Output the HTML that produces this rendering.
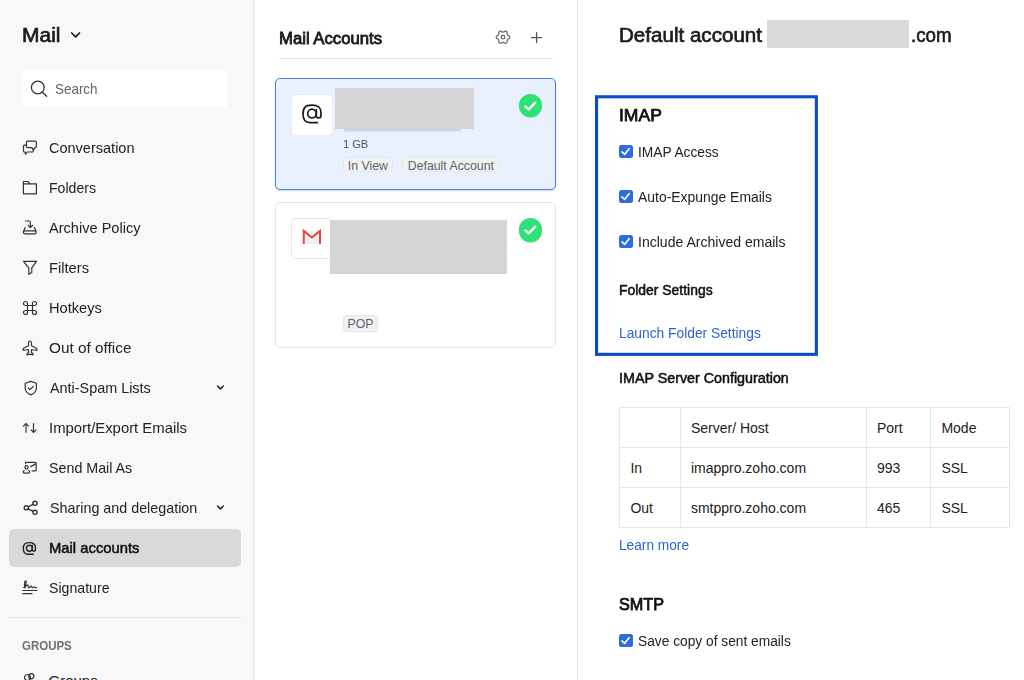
<!DOCTYPE html>
<html lang="en">
<head>
<meta charset="utf-8">
<title>Mail Accounts</title>
<style>
*{box-sizing:border-box;margin:0;padding:0}
html,body{width:1024px;height:680px;overflow:hidden;background:#fff}
body{font-family:"Liberation Sans",sans-serif;color:#1d1d1f;position:relative;font-size:14px}
.abs{position:absolute}
.t{position:absolute;white-space:nowrap;line-height:1}
/* sidebar */
#side{position:absolute;left:0;top:0;width:255px;height:680px;background:linear-gradient(90deg,#f8f8f8 0,#f8f8f8 251px,#f1f1f1 254px);border-right:1px solid #ededed}
#search{position:absolute;left:22px;top:70px;width:205px;height:37px;background:#fff;border-radius:4px}
.nav{position:absolute;left:0;width:254px;height:40px}
.nav .lbl{position:absolute;left:48.5px;top:50%;transform:translateY(-50%);font-size:15px;color:#222;white-space:nowrap;line-height:1}
.nav svg{position:absolute;left:22px;top:12px;width:16px;height:16px;fill:none;stroke:#333;stroke-width:1.2;stroke-linecap:round;stroke-linejoin:round}
.nav .chev{left:215px;top:15px;width:10px;height:10px;stroke-width:1.5;stroke:#222}
#active{position:absolute;left:9px;top:529px;width:232px;height:38px;border-radius:5px;background:#d8d9db}
/* middle */
#mid{position:absolute;left:255px;top:0;width:323px;height:680px;background:#fff;border-right:1px solid #e6e6e6}
.card{position:absolute;left:275px;width:281px;border-radius:5px}
.ibox{position:absolute;left:292px;width:40px;height:40px;background:#fff;border:1px solid #e3e3e3;border-radius:4px}
.redact{position:absolute;background:#d5d5d6}
.tag{position:absolute;height:15.800px;border:1px solid #e6e7e9;background:#f1f2f3;border-radius:2.500px;font-size:12.300px;line-height:16.600px;color:#5e636b;text-align:center;white-space:nowrap}
.ok{position:absolute;width:23.400px;height:23.400px;border-radius:50%;background:#2fe276;box-shadow:0 0.500px 0.500px rgba(40,120,80,.5)}
/* right */
.cb{position:absolute;left:619px;width:13.500px;height:13.200px;border-radius:2.500px;background:#2f6be0}
.cb svg{position:absolute;left:0;top:0;width:100%;height:100%;fill:none;stroke:#fff;stroke-width:1.8;stroke-linecap:round;stroke-linejoin:round}
table{position:absolute;left:619px;top:407px;border-collapse:collapse;font-size:14px;color:#222}
td{border:1px solid #e6e6e6;height:40px;padding:0 0 0 10.400px;vertical-align:middle}

.t,.nav .lbl{transform-origin:0 50%}
.nav .lbl{top:11.7px;transform:none}
#n1{transform:scaleX(0.9673)}
#n2{transform:scaleX(0.9394)}
#n3{transform:scaleX(0.9713)}
#n4{transform:scaleX(0.9794)}
#n5{transform:scaleX(0.9734)}
#n6{transform:scaleX(1.0234)}
#n7{transform:scaleX(0.9591)}
#n8{transform:scaleX(0.9912)}
#n9{transform:scaleX(0.9509)}
#n10{transform:scaleX(0.9543)}
#n12{transform:scaleX(0.9421)}
#c1{transform:scaleX(0.9815)}
#c2{transform:scaleX(0.9945)}
#c3{transform:scaleX(1.0029)}
#lfs{transform:scaleX(0.9849)}
#lm{transform:scaleX(0.9778)}
#c4{transform:scaleX(0.9818)}
#mailttl{transform:scaleX(1.0500)}
#n11{transform:scaleX(0.9867)}
#grp{transform:scaleX(0.9190)}
#macc{transform:scaleX(1.0434)}
#hdr1{transform:scaleX(1.0289)}
#hdr2{transform:scaleX(0.9345)}
#imap{transform:scaleX(1.0950)}
#fs{transform:scaleX(0.9939)}
#isc{transform:scaleX(1.0212)}
#smtp{transform:scaleX(1.0124)}
</style>
</head>
<body>

<!-- ============ SIDEBAR ============ -->
<div id="side">
  <div class="t" id="mailttl" style="left:22px;top:25.400px;font-size:20px;-webkit-text-stroke:0.65px currentColor;color:#1a1a1a;">Mail</div>
  <svg class="abs" style="left:69px;top:30px" width="12" height="10" viewBox="0 0 12 10" fill="none" stroke="#1a1a1a" stroke-width="1.700" stroke-linecap="round" stroke-linejoin="round"><path d="M2.700 3 L6.600 6.900 L10.500 3"/></svg>

  <div id="search">
    <svg class="abs" style="left:8px;top:9px" width="18" height="18" viewBox="0 0 18 18" fill="none" stroke="#333" stroke-width="1.3" stroke-linecap="round"><circle cx="7.800" cy="8.500" r="6.400"/><path d="M12.500 13.200 L16.600 17.200"/></svg>
    <div class="t" id="srch" style="left:33px;top:10.5px;font-size:15px;color:#60646b;transform:scaleX(.895)">Search</div>
  </div>

  <div id="active"></div>

  <div class="nav" style="top:128px"><svg viewBox="0 0 16 16"><path d="M5.500 1.200 H13.300 Q14.300 1.200 14.300 2.200 V6.600 Q14.300 7.600 13.300 7.600 H12.800 L11.500 10.400 L10 7.600 H5.500 Q4.500 7.600 4.500 6.600 V2.200 Q4.500 1.200 5.500 1.200 Z"/><path d="M4.500 5.200 H2.500 Q1.500 5.200 1.500 6.200 V11 Q1.500 12 2.500 12 H2.800 L3.600 14.200 L5 12 H10.800 L11.500 10.400"/></svg><span class="lbl" id="n1">Conversation</span></div>
  <div class="nav" style="top:168px"><svg viewBox="0 0 16 16"><path d="M1.400 3.900 H14.400 V13.800 H1.400 Z"/><path d="M1.400 3.900 V1.500 H6.300 L7.600 3.900"/></svg><span class="lbl" id="n2">Folders</span></div>
  <div class="nav" style="top:208px"><svg viewBox="0 0 16 16"><path d="M3.600 1 H6.600 Q8.400 1 8.400 2.800 V7.300"/><path d="M6.200 5.300 L8.400 7.500 L10.600 5.300"/><path d="M2.700 10.800 H12.900 Q14.100 10.800 14.100 12 V12.600 Q14.100 13.800 12.900 13.800 H2.700 Q1.500 13.800 1.500 12.600 V12 Q1.500 10.800 2.700 10.800 Z"/><path d="M1.600 11.300 L3.200 7.500 M14 11.300 L12.400 7.500"/></svg><span class="lbl" id="n3">Archive Policy</span></div>
  <div class="nav" style="top:248px"><svg viewBox="0 0 16 16"><path d="M1.500 1.300 H14.500 L9.800 7.800 V12.500 L6.800 14.300 V7.800 Z"/></svg><span class="lbl" id="n4">Filters</span></div>
  <div class="nav" style="top:288px"><svg viewBox="0 0 16 16"><path d="M5.5 5.5 H10.5 V10.5 H5.5 Z"/><path d="M5.5 5.5 V3.5 A2 2 0 1 0 3.5 5.5 H5.5"/><path d="M10.5 5.5 V3.5 A2 2 0 1 1 12.5 5.5 H10.5"/><path d="M5.5 10.5 V12.5 A2 2 0 1 1 3.5 10.5 H5.5"/><path d="M10.5 10.5 V12.5 A2 2 0 1 0 12.5 10.5 H10.5"/></svg><span class="lbl" id="n5">Hotkeys</span></div>
  <div class="nav" style="top:328px"><svg viewBox="0 0 16 16"><path d="M8 1 C9 1 9.5 2 9.5 3 V5.8 L14.8 8.5 V10.5 L9.5 9.5 V12.5 L11 13.8 V15 L8 14.2 L5 15 V13.8 L6.5 12.5 V9.5 L1.2 10.5 V8.5 L6.5 5.8 V3 C6.500 2 7 1 8 1 Z"/></svg><span class="lbl" id="n6">Out of office</span></div>
  <div class="nav" style="top:368px"><svg viewBox="0 0 16 16"><path d="M8.800 1.400 L14.400 3.300 V8 C14.400 11.300 12 13.600 8.800 14.900 C5.600 13.600 3.200 11.300 3.200 8 V3.300 Z"/><path d="M6.300 8 L8 9.700 L11.400 6.300"/></svg><span class="lbl" id="n7" style="left:49.5px">Anti-Spam Lists</span><svg class="chev" viewBox="0 0 10 10"><path d="M2.500 3 L5.400 5.900 L8.300 3"/></svg></div>
  <div class="nav" style="top:408px"><svg viewBox="0 0 16 16"><path d="M4 12.300 V3.700"/><path d="M1.500 6.200 L4 3.700 L6.500 6.200"/><path d="M11.500 3.700 V12.300"/><path d="M9 9.800 L11.500 12.300 L14 9.800"/></svg><span class="lbl" id="n8">Import/Export Emails</span></div>
  <div class="nav" style="top:448px"><svg viewBox="0 0 16 16"><path d="M3.500 3.600 V2.400 H13.100 Q14.100 2.400 14.100 3.400 V9.900 Q14.100 10.900 13.100 10.900 H10.100"/><path d="M13.700 3.900 L8.700 6.600"/><circle cx="4.500" cy="7.300" r="1.600"/><path d="M2.300 10.500 Q1.200 10.500 1.200 11.800 Q1.200 13.200 2.400 13.200 H6.400 Q7.600 13.200 7.600 11.800 Q7.600 10.500 6.500 10.500"/></svg><span class="lbl" id="n9">Send Mail As</span></div>
  <div class="nav" style="top:488px"><svg viewBox="0 0 16 16"><g stroke-width="1.350"><circle cx="13" cy="3.300" r="2.100"/><circle cx="13" cy="12.300" r="2.100"/><circle cx="4.300" cy="7.800" r="2.100"/><path d="M6.200 6.800 L11.100 4.300"/><path d="M6.200 8.800 L11.100 11.300"/></g></svg><span class="lbl" id="n10" style="left:49.5px">Sharing and delegation</span><svg class="chev" viewBox="0 0 10 10"><path d="M2.500 3 L5.400 5.900 L8.300 3"/></svg></div>
  <div class="nav" style="top:528px"><svg viewBox="9 8 22 22" style="left:22.300px;top:13px;width:14.800px;height:15px;stroke-width:2.100;stroke:#222"><path d="M25.500 27.600 H18 C13 27.600 11 25 11 19 C11 13 13 10.200 20 10.200 C27 10.200 29 13 29 18 V20 C29 22.500 28 23 26.600 23 C25 23 24.300 22 24.300 20.500 V14.500"/><ellipse cx="20" cy="18.600" rx="4.300" ry="4.400"/></svg><span class="lbl" id="n11" style="-webkit-text-stroke:0.520px currentColor;color:#111">Mail accounts</span></div>
  <div class="nav" style="top:568px"><svg viewBox="0 0 16 16"><path d="M0.800 10.500 H15"/><path d="M0.800 13.700 H10"/><path d="M1.500 7.500 C2.800 7.500 5.200 1.800 3.800 0.900 C2.500 0.300 2.200 4.500 2.800 7.800 C3.600 6.500 4.500 4.800 5.500 4.800 C6.500 4.800 5.800 7.800 6.800 7.800 C7.800 7.800 8.200 6 9 6 C9.800 6 9.600 7.800 10.500 7.800 C11.300 7.800 11.600 6.800 12.400 6.800 C13 6.800 13 7.800 14.500 7.800"/></svg><span class="lbl" id="n12">Signature</span></div>

  <div class="abs" style="left:9px;top:617px;width:232px;height:1px;background:#e3e3e3"></div>
  <div class="t" id="grp" style="left:21.800px;top:640px;font-size:12.500px;font-weight:bold;color:#6c7178">GROUPS</div>
  <div class="nav" style="top:661px"><svg viewBox="0 0 16 16"><circle cx="5.500" cy="4.500" r="3"/><circle cx="9.300" cy="3.200" r="2.600"/></svg><span class="lbl" id="n13">Groups</span></div>
</div>

<!-- ============ MIDDLE ============ -->
<div id="mid"></div>
<div class="t" id="macc" style="left:279px;top:30.500px;font-size:16px;-webkit-text-stroke:0.800px currentColor;color:#1a1a1a">Mail Accounts</div>
<svg class="abs" style="left:494.600px;top:29px" width="16" height="16" viewBox="0 0 16 16" fill="none" stroke="#666" stroke-width="1.200" stroke-linejoin="round"><path d="M14.71 8.20 L14.68 8.78 L14.47 9.34 L13.75 9.74 L13.01 10.02 L12.70 10.39 L12.49 10.79 L12.25 11.18 L12.08 11.63 L12.21 12.41 L12.22 13.23 L11.85 13.70 L11.36 14.01 L10.84 14.28 L10.25 14.37 L9.54 13.95 L8.93 13.45 L8.45 13.37 L8.00 13.39 L7.55 13.37 L7.07 13.45 L6.46 13.95 L5.75 14.37 L5.16 14.28 L4.65 14.01 L4.15 13.70 L3.78 13.23 L3.79 12.41 L3.92 11.63 L3.75 11.18 L3.51 10.80 L3.30 10.39 L2.99 10.02 L2.25 9.74 L1.53 9.34 L1.32 8.78 L1.29 8.20 L1.32 7.62 L1.53 7.06 L2.25 6.66 L2.99 6.38 L3.30 6.01 L3.51 5.60 L3.75 5.22 L3.92 4.77 L3.79 3.99 L3.78 3.17 L4.15 2.70 L4.64 2.39 L5.16 2.12 L5.75 2.03 L6.46 2.45 L7.07 2.95 L7.55 3.03 L8.00 3.01 L8.45 3.03 L8.93 2.95 L9.54 2.45 L10.25 2.03 L10.84 2.12 L11.35 2.39 L11.85 2.70 L12.22 3.17 L12.21 3.99 L12.08 4.77 L12.25 5.22 L12.49 5.61 L12.70 6.01 L13.01 6.38 L13.75 6.66 L14.47 7.06 L14.68 7.62 Z"/><circle cx="8" cy="8.200" r="1.800"/></svg>
<svg class="abs" style="left:530px;top:30.600px" width="13.200" height="13.200" viewBox="0 0 13.200 13.200" fill="none" stroke="#555" stroke-width="1.300" stroke-linecap="round"><path d="M6.600 1.600 V11.600 M1.600 6.600 H11.600"/></svg>
<div class="abs" style="left:279px;top:57.500px;width:274px;height:1px;background:#e6e6e6"></div>

<!-- card 1 -->
<div class="card" style="top:78px;height:112px;background:#eaf1fe;border:1.200px solid #4a7de3;box-shadow:0 1px 2px rgba(60,100,200,.25)"></div>
<div class="ibox" style="top:94.500px;border:none;box-shadow:0 0 1px rgba(120,140,200,.25)"><svg class="abs" style="left:0;top:0" width="40" height="40" viewBox="0 0 40 40" fill="none" stroke="#1a1a1a" stroke-width="1.700" stroke-linecap="round"><path d="M25.500 27.600 H18 C13 27.600 11 25 11 19 C11 13 13 10.200 20 10.200 C27 10.200 29 13 29 18 V20 C29 22.500 28 23 26.600 23 C25 23 24.300 22 24.300 20.500 V14.500"/><ellipse cx="20" cy="18.600" rx="4.300" ry="4.400"/></svg></div>
<div class="abs" style="left:344px;top:127.500px;width:117px;height:3px;background:rgba(140,150,185,.4);filter:blur(1px)"></div>
<div class="redact" style="left:335px;top:88px;width:139px;height:41px"></div>
<div class="t" id="gb" style="left:343px;top:138.600px;font-size:11px;color:#50555c">1 GB</div>
<div class="tag" id="tg1" style="left:343px;top:156.600px;width:49.700px">In View</div>
<div class="tag" id="tg2" style="left:402px;top:156.600px;width:97.700px">Default Account</div>
<div class="ok" style="left:518.800px;top:94.100px"><svg class="abs" style="left:0;top:0" width="23.400" height="23.400" viewBox="0 0 23.400 23.400" fill="none" stroke="#fff" stroke-width="2.300" stroke-linecap="round" stroke-linejoin="round"><path d="M6.300 12.400 L9.600 15.400 L16.300 8.600"/></svg></div>

<!-- card 2 -->
<div class="card" style="top:202px;height:146px;background:#fff;border:1px solid #e6e6e6"></div>
<div class="ibox" style="top:218px;left:291px;width:41px;height:41px;border-color:#e9e9e9"><svg class="abs" style="left:-1px;top:-1px" width="41" height="41" viewBox="0 0 41 41" fill="none"><path d="M13.500 13.500 H28.300 V25.800 H13.500 Z" fill="#efefef"/><path d="M12.800 26 V12.900 L20.900 19.500 L29 12.900 V26" stroke="#e0483c" stroke-width="2"/></svg></div>
<div class="redact" style="left:330.300px;top:220px;width:176.400px;height:54px"></div>
<div class="tag" id="tg3" style="left:343px;top:315px;width:35px;height:16.500px;line-height:17.600px">POP</div>
<div class="ok" style="left:518.800px;top:218.300px"><svg class="abs" style="left:0;top:0" width="23.400" height="23.400" viewBox="0 0 23.400 23.400" fill="none" stroke="#fff" stroke-width="2.300" stroke-linecap="round" stroke-linejoin="round"><path d="M6.300 12.400 L9.600 15.400 L16.300 8.600"/></svg></div>

<!-- ============ RIGHT ============ -->
<div class="t" id="hdr1" style="left:619px;top:25px;font-size:20px;-webkit-text-stroke:0.65px currentColor;color:#1a1a1a">Default account</div>
<div class="redact" style="left:766.800px;top:19.900px;width:142.200px;height:27.700px;background:#d9d9da"></div>
<div class="t" id="hdr2" style="left:911px;top:25px;font-size:20px;-webkit-text-stroke:0.65px currentColor;color:#1a1a1a">.com</div>

<svg class="abs" style="left:590px;top:90px" width="234" height="272" viewBox="590 90 234 272" fill="none"><rect x="596.550" y="96.750" width="219.800" height="257.600" stroke="#0a4cca" stroke-width="3.100"/></svg>
<div class="t" id="imap" style="left:619px;top:108.400px;font-size:16px;-webkit-text-stroke:0.750px currentColor;color:#111">IMAP</div>

<div class="cb" style="top:145px"><svg viewBox="0 0 14 14"><path d="M3 7.400 L5.900 9.900 L10.600 4"/></svg></div>
<div class="t" id="c1" style="left:638.400px;top:145px;font-size:14px;color:#222">IMAP Access</div>
<div class="cb" style="top:190px"><svg viewBox="0 0 14 14"><path d="M3 7.400 L5.900 9.900 L10.600 4"/></svg></div>
<div class="t" id="c2" style="left:638.400px;top:190px;font-size:14px;color:#222">Auto-Expunge Emails</div>
<div class="cb" style="top:235px"><svg viewBox="0 0 14 14"><path d="M3 7.400 L5.900 9.900 L10.600 4"/></svg></div>
<div class="t" id="c3" style="left:638.400px;top:235px;font-size:14px;color:#222">Include Archived emails</div>

<div class="t" id="fs" style="left:619px;top:283px;font-size:14px;-webkit-text-stroke:0.520px currentColor;color:#111">Folder Settings</div>
<div class="t" id="lfs" style="left:619px;top:326px;font-size:14px;color:#2f62cf">Launch Folder Settings</div>

<div class="t" id="isc" style="left:619px;top:371px;font-size:14px;-webkit-text-stroke:0.520px currentColor;color:#111">IMAP Server Configuration</div>

<table>
<tr><td style="width:60.500px"></td><td style="width:186px">Server/ Host</td><td style="width:64.500px">Port</td><td style="width:79px">Mode</td></tr>
<tr><td>In</td><td>imappro.zoho.com</td><td>993</td><td>SSL</td></tr>
<tr><td>Out</td><td>smtppro.zoho.com</td><td>465</td><td>SSL</td></tr>
</table>

<div class="t" id="lm" style="left:619px;top:538.400px;font-size:14px;color:#2f62cf">Learn more</div>
<div class="t" id="smtp" style="left:619px;top:597px;font-size:16px;-webkit-text-stroke:0.750px currentColor;color:#111">SMTP</div>
<div class="cb" style="top:634px"><svg viewBox="0 0 14 14"><path d="M3 7.400 L5.900 9.900 L10.600 4"/></svg></div>
<div class="t" id="c4" style="left:638.400px;top:634px;font-size:14px;color:#222">Save copy of sent emails</div>

</body>
</html>
